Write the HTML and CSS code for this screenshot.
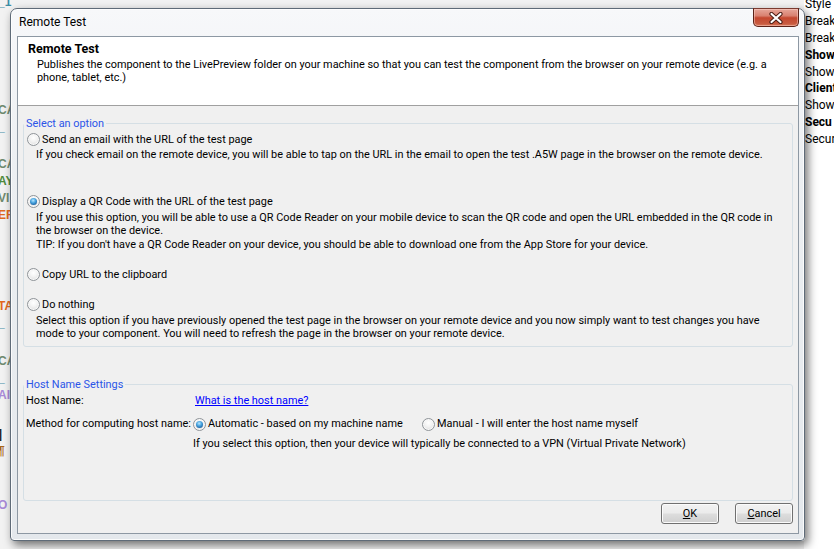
FILE: index.html
```html
<!DOCTYPE html>
<html>
<head>
<meta charset="utf-8">
<link rel="stylesheet" href="styles.css">
</head>
<body>
<div class="desktop">
  <div class="editor">
    <div class="ln c-teal" style="margin-top:-6px">_1</div>
    <div class="ln c-gray" style="margin-top:91px">CA</div>
    <div class="ln c-teal">_</div>
    <div class="ln c-gray" style="margin-top:20px">CA</div>
    <div class="ln c-green">AY</div>
    <div class="ln c-gray">VI</div>
    <div class="ln c-orange">ER</div>
    <div class="ln c-orange" style="margin-top:74px">TA</div>
    <div class="ln c-teal">_</div>
    <div class="ln c-gray" style="margin-top:21px">CA</div>
    <div class="ln c-teal">_</div>
    <div class="ln c-purple">AI</div>
    <div class="ln c-black" style="margin-top:22px">]</div>
    <div class="ln c-brown">¶</div>
    <div class="ln c-purple" style="margin-top:37px">O</div>
  </div>
  <div class="props">
    <div class="prow">Style</div>
    <div class="prow">Break</div>
    <div class="prow">Break</div>
    <div class="prow cat">Show</div>
    <div class="prow">Show.</div>
    <div class="prow cat">Client</div>
    <div class="prow">Show.</div>
    <div class="prow cat">Secu</div>
    <div class="prow">Secur</div>
  </div>

  <div class="window">
    <div class="titlebar">
      <span class="title">Remote Test</span>
      <div class="close">
        <svg width="16" height="12" viewBox="0 0 16 12">
          <path d="M3.5 2 L12.5 10 M12.5 2 L3.5 10" stroke="#4a1d14" stroke-width="4.2" stroke-linecap="round"/>
          <path d="M3.5 2 L12.5 10 M12.5 2 L3.5 10" stroke="#ffffff" stroke-width="2.2" stroke-linecap="round"/>
        </svg>
      </div>
    </div>
    <div class="client">
      <div class="header">
        <div class="h-title">Remote Test</div>
        <div class="h-desc">Publishes the component to the LivePreview folder on your machine so that you can test the component from the browser on your remote device (e.g. a phone, tablet, etc.)</div>
      </div>

      <fieldset class="group g1">
        <legend>Select an option</legend>
        <div class="gbody">
          <div class="opt o1"><span class="radio"></span><span>Send an email with the URL of the test page</span></div>
          <div class="desc d1">If you check email on the remote device, you will be able to tap on the URL in the email to open the test .A5W page in the browser on the remote device.</div>

          <div class="opt o2"><span class="radio on"></span><span>Display a QR Code with the URL of the test page</span></div>
          <div class="desc d2">If you use this option, you will be able to use a QR Code Reader on your mobile device to scan the QR code and open the URL embedded in the QR code in the browser on the device.</div>
          <div class="desc tip">TIP: If you don't have a QR Code Reader on your device, you should be able to download one from the App Store for your device.</div>

          <div class="opt o3"><span class="radio"></span><span>Copy URL to the clipboard</span></div>

          <div class="opt o4"><span class="radio"></span><span>Do nothing</span></div>
          <div class="desc d4">Select this option if you have previously opened the test page in the browser on your remote device and you now simply want to test changes you have mode to your component. You will need to refresh the page in the browser on your remote device.</div>
        </div>
      </fieldset>

      <fieldset class="group g2">
        <legend>Host Name Settings</legend>
        <div class="hgrid">
          <div class="hl r1">Host Name:</div>
          <div class="r1"><a class="link">What is the host name?</a></div>
          <div class="hl r2">Method for computing host name:</div>
          <div class="r2 methods">
            <span class="opt auto"><span class="radio on"></span><span>Automatic - based on my machine name</span></span>
            <span class="opt"><span class="radio"></span><span>Manual - I will enter the host name myself</span></span>
          </div>
          <div class="r3 empty"></div>
          <div class="r3 note">If you select this option, then your device will typically be connected to a VPN (Virtual Private Network)</div>
        </div>
      </fieldset>

      <div class="buttons">
        <div class="btn"><u>O</u>K</div>
        <div class="btn"><u>C</u>ancel</div>
      </div>
    </div>
  </div>
</div>
</body>
</html>
```
FILE: styles.css
```css
* { box-sizing: border-box; }
html, body { margin: 0; padding: 0; }
body {
  width: 834px;
  height: 549px;
  overflow: hidden;
  background: #ffffff;
  font-family: "Roboto", "Open Sans", sans-serif;
  font-size: 10.9px;
  color: #000;
}
.desktop {
  position: relative;
  width: 834px;
  height: 549px;
  display: flex;
  background: #f4f4f4;
}
.editor {
  flex: 1;
  background: #f2f2f2;
  display: flex;
  flex-direction: column;
  overflow: hidden;
}
.ln {
  height: 17px;
  line-height: 17px;
  font-family: "Liberation Sans", sans-serif;
  font-weight: bold;
  font-size: 12px;
  text-indent: -2px;
  white-space: nowrap;
}
.c-teal { color: #3d8ea6; }
.c-gray { color: #6f8a6f; }
.c-green { color: #4f8a3c; }
.c-orange { color: #e2691c; }
.c-purple { color: #a98ad8; }
.c-black { color: #222; }
.c-brown { color: #a8651a; }

.props {
  width: 30px;
  background: #ffffff;
  display: flex;
  flex-direction: column;
  overflow: hidden;
  padding-left: 1px;
}
.prow {
  height: 16.9px;
  line-height: 17px;
  white-space: nowrap;
  font-size: 12px;
}
.prow:first-child { margin-top: -4px; }
.prow.cat { font-weight: bold; }

/* window */
.window {
  position: absolute;
  left: 10px;
  top: 8px;
  width: 795px;
  height: 533px;
  border: 1px solid #5f6b78;
  border-radius: 7px 7px 4px 4px;
  background: linear-gradient(180deg, #f7f8fa 0%, #eceff2 30%, #e4e8ec 100%);
  box-shadow: 3px 4px 10px rgba(0, 0, 0, 0.55), inset 0 0 0 1px rgba(255,255,255,0.8);
  padding: 0 5px 6px 6px;
  display: flex;
  flex-direction: column;
}
.titlebar {
  height: 27px;
  display: flex;
  align-items: flex-start;
}
.title {
  padding-top: 6px;
  padding-left: 2px;
  font-size: 12px;
  line-height: 15px;
  color: #000;
}
.close {
  margin-left: auto;
  margin-top: -1px;
  width: 46px;
  height: 19px;
  border: 1px solid #5b2218;
  border-top-color: #7a3a30;
  border-radius: 0 0 5px 5px;
  background: linear-gradient(180deg, #e6a699 0%, #d98170 40%, #c4472f 52%, #c85a3f 85%, #d9785a 100%);
  box-shadow: inset 0 0 0 1px rgba(255, 220, 210, 0.45);
  display: flex;
  align-items: center;
  justify-content: center;
}
.close svg { display: block; }

.client {
  flex: 1;
  border: 1px solid #8d98a3;
  background: #f0f0f0;
  display: flex;
  flex-direction: column;
}
.header {
  height: 69px;
  flex: none;
  background: #ffffff;
  border-bottom: 1px solid #a0a0a0;
  padding: 3px 10px 0 10px;
}
.h-title {
  font-weight: bold;
  font-size: 12.5px;
  line-height: 17px;
}
.h-desc {
  margin-top: 1px;
  padding-left: 9px;
  line-height: 13px;
  padding-right: 10px;
}

.group {
  margin: 0 5px;
  padding: 0;
  border: 1px solid #d5dfe5;
  border-radius: 3px;
  min-width: 0;
}
.group legend {
  padding: 0 2px;
  margin-left: 0;
  color: #2b55e8;
  line-height: 15px;
}
.g1 { margin-top: 10px; }
.gbody { padding: 0 6px 6px 3px; }
.opt {
  display: flex;
  align-items: center;
  height: 16px;
  gap: 2px;
  white-space: nowrap;
}
.radio {
  width: 13px;
  height: 13px;
  border-radius: 50%;
  border: 1px solid #8f9499;
  background: radial-gradient(circle at 50% 35%, #ffffff 0%, #f3f3f3 40%, #d8d8d8 100%);
  box-shadow: inset 0 0 0 1px #f8f8f8;
  flex: none;
  display: flex;
  align-items: center;
  justify-content: center;
}
.radio.on::after {
  content: "";
  width: 7px;
  height: 7px;
  border-radius: 50%;
  background: radial-gradient(circle at 45% 35%, #b9e6ff 0%, #4aa6e0 40%, #1b5fa0 80%, #0d3d70 100%);
}
.desc {
  padding-left: 9px;
  line-height: 13px;
}
.o1 { margin-top: 0; }
.d1 { margin-top: 1px; }
.o2 { margin-top: 32px; }
.d2 { margin-top: 2px; }
.tip { margin-top: 1px; }
.o3 { margin-top: 15px; }
.o4 { margin-top: 14px; }
.d4 { margin-top: 2px; }

.g2 { margin-top: 30px; }
.hgrid {
  display: grid;
  grid-template-columns: 168px 1fr;
  padding: 0 0 49px 2px;
}
.hl { white-space: nowrap; }
.r1 { line-height: 15px; margin-top: 1px; }
.r2 { margin-top: 8px; line-height: 16px; }
.r3 { margin-top: 4px; line-height: 15px; }
.hl.r2 { height: 16px; line-height: 16px; }
.link { color: #0000ff; text-decoration: underline; padding-left: 1px; }
.methods { display: flex; gap: 0; margin-left: -1px; }
.auto { width: 229px; }
.note { margin-left: -1px; }

.buttons {
  margin-top: 2px;
  display: flex;
  justify-content: flex-end;
  gap: 16px;
  padding-right: 5px;
}
.btn {
  width: 58px;
  height: 21px;
  border: 1px solid #707070;
  border-radius: 3px;
  background: linear-gradient(180deg, #f2f2f2 0%, #ebebeb 48%, #dddddd 52%, #cfcfcf 100%);
  box-shadow: inset 0 0 0 1px #fbfbfb;
  display: flex;
  align-items: center;
  justify-content: center;
  line-height: 15px;
}
.btn u { text-decoration: underline; }
```
